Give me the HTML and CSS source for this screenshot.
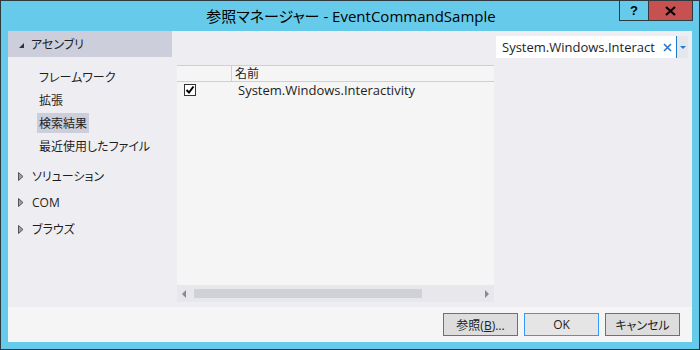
FILE: index.html
```html
<!DOCTYPE html>
<html lang="ja">
<head>
    <meta charset="UTF-8">
    <title>参照マネージャー - EventCommandSample</title>
    <link rel="stylesheet" href="styles.css">
</head>
<body>
    <div class="window">
        <div class="titlebar">
            <div class="title">参照マネージャー - EventCommandSample</div>
            <div class="caption-buttons">
                <div class="cap-btn help">?</div>
                <div class="cap-btn close">
                    <svg width="11" height="10" viewBox="0 0 11 10"><path d="M1 1 L10 9 M10 1 L1 9" stroke="#000" stroke-width="2.2"/></svg>
                </div>
            </div>
        </div>

        <div class="client">
            <div class="main">
                <div class="sidebar">
                    <div class="group-header">
                        <span class="tri-open"></span>
                        <span>アセンブリ</span>
                    </div>
                    <div class="sub-items">
                        <div class="sub-item">フレームワーク</div>
                        <div class="sub-item">拡張</div>
                        <div class="sub-item"><span class="selected">検索結果</span></div>
                        <div class="sub-item">最近使用したファイル</div>
                    </div>
                    <div class="group">
                        <svg class="tri-closed" width="6" height="9" viewBox="0 0 6 9"><path d="M0.5 0.5 L5 4.5 L0.5 8.5 Z" fill="#a0a0a0" stroke="#555" stroke-width="1"/></svg>
                        <span>ソリューション</span>
                    </div>
                    <div class="group">
                        <svg class="tri-closed" width="6" height="9" viewBox="0 0 6 9"><path d="M0.5 0.5 L5 4.5 L0.5 8.5 Z" fill="#a0a0a0" stroke="#555" stroke-width="1"/></svg>
                        <span>COM</span>
                    </div>
                    <div class="group">
                        <svg class="tri-closed" width="6" height="9" viewBox="0 0 6 9"><path d="M0.5 0.5 L5 4.5 L0.5 8.5 Z" fill="#a0a0a0" stroke="#555" stroke-width="1"/></svg>
                        <span>ブラウズ</span>
                    </div>
                </div>

                <div class="center">
                    <div class="list">
                        <div class="list-header">
                            <div class="col-check"></div>
                            <div class="col-name">名前</div>
                        </div>
                        <div class="list-row">
                            <div class="col-check">
                                <span class="checkbox">
                                    <svg width="10" height="10" viewBox="0 0 10 10"><path d="M1.5 5 L4 7.5 L8.5 1.5" fill="none" stroke="#000" stroke-width="2"/></svg>
                                </span>
                            </div>
                            <div class="row-name">System.Windows.Interactivity</div>
                        </div>
                    </div>
                    <div class="hscroll">
                        <span class="arrow-left"></span>
                        <div class="track"><div class="thumb"></div></div>
                        <span class="arrow-right"></span>
                    </div>
                </div>

                <div class="right">
                    <div class="search">
                        <span class="search-text">System.Windows.Interact</span>
                        <span class="search-clear">
                            <svg width="9" height="9" viewBox="0 0 9 9"><path d="M1 1 L8 8 M8 1 L1 8" stroke="#1e7bd0" stroke-width="1.6"/></svg>
                        </span>
                        <span class="search-drop"><span class="drop-arrow"></span></span>
                    </div>
                </div>
            </div>

            <div class="footer">
                <button class="btn">参照(<u>B</u>)...</button>
                <button class="btn default">OK</button>
                <button class="btn">キャンセル</button>
            </div>
        </div>
    </div>
</body>
</html>
```

FILE: styles.css
```css
body {
    margin: 0;
    font-family: "Open Sans", "Noto Sans CJK JP", sans-serif;
    font-size: 12px;
    font-feature-settings: "palt";
    color: #1e1e1e;
}
.window {
    width: 700px;
    height: 350px;
    box-sizing: border-box;
    border: 1px solid #2f3a40;
    background: #66cbea;
    display: flex;
    flex-direction: column;
}
.titlebar {
    height: 30px;
    position: relative;
    display: flex;
    align-items: center;
    justify-content: center;
}
.title {
    font-size: 15px;
    color: #000;
    margin-left: 2px;
    margin-top: -2px;
}
.caption-buttons {
    position: absolute;
    top: -1px;
    right: 6px;
    display: flex;
}
.cap-btn {
    height: 21px;
    display: flex;
    align-items: center;
    justify-content: center;
    border: 1px solid #2f3a40;
    box-sizing: border-box;
}
.help {
    width: 29px;
    font-weight: bold;
    font-size: 13px;
    font-family: "Liberation Sans", sans-serif;
    color: #000;
    border-right: none;
}
.close {
    width: 45px;
    background: #c75050;
}
.client {
    flex: 1;
    margin: 0 7px 7px 7px;
    background: #eeeef2;
    display: flex;
    flex-direction: column;
}
.main {
    flex: 1;
    display: flex;
}
.sidebar {
    width: 169px;
}
.group-header {
    width: 164px;
    height: 26px;
    background: #cccedb;
    display: flex;
    align-items: center;
}
.tri-open {
    width: 0;
    height: 0;
    border-left: 5px solid transparent;
    border-bottom: 5px solid #333;
    margin: 2px 7px 0 11px;
}
.tri-closed {
    margin: 0 8px 0 10px;
}
.sub-items {
    padding: 8px 0 6px 31px;
}
.sub-item {
    height: 23px;
    display: flex;
    align-items: center;
}
.selected {
    background: #cccedb;
    padding: 1px 2px;
    margin-left: -2px;
}
.group {
    height: 26.5px;
    display: flex;
    align-items: center;
}
.center {
    width: 317px;
    display: flex;
    flex-direction: column;
    padding-top: 34px;
}
.list {
    flex: 1;
    background: #f5f5f5;
}
.list-header {
    height: 15px;
    border-top: 1px solid #cccedb;
    border-bottom: 1px solid #cccedb;
    display: flex;
    align-items: center;
}
.col-check {
    width: 54px;
    height: 100%;
    display: flex;
    align-items: center;
}
.list-header .col-check {
    border-right: 1px solid #cccedb;
}
.col-name {
    padding-left: 3px;
    line-height: 14px;
}
.list-row {
    height: 16px;
    display: flex;
    align-items: center;
}
.checkbox {
    width: 12px;
    height: 12px;
    box-sizing: border-box;
    border: 1px solid #333;
    background: #fff;
    margin-left: 7px;
    display: flex;
    align-items: center;
    justify-content: center;
}
.row-name {
    padding-left: 7px;
    font-size: 13px;
    line-height: 15px;
}
.hscroll {
    height: 17px;
    background: #e8e8ec;
    margin-bottom: 5px;
    display: flex;
    align-items: center;
}
.arrow-left {
    width: 0;
    height: 0;
    border-top: 4px solid transparent;
    border-bottom: 4px solid transparent;
    border-right: 4px solid #868999;
    margin: 0 5px 0 5px;
}
.arrow-right {
    width: 0;
    height: 0;
    border-top: 4px solid transparent;
    border-bottom: 4px solid transparent;
    border-left: 4px solid #868999;
    margin: 0 5px 0 5px;
}
.track {
    flex: 1;
    height: 9px;
    margin-left: 3px;
}
.thumb {
    width: 228px;
    height: 9px;
    background: #d0d0d7;
}
.right {
    flex: 1;
}
.search {
    margin: 5px 4px 0 2px;
    height: 22px;
    background: #fff;
    display: flex;
    align-items: center;
}
.search-text {
    padding-left: 6px;
    flex: 1;
    white-space: nowrap;
    overflow: hidden;
    font-size: 13px;
}
.search-clear {
    width: 14px;
    display: flex;
    justify-content: center;
}
.search-drop {
    width: 11px;
    height: 22px;
    margin-left: 2px;
    border-left: 1px solid #1e7bd0;
    background: #e6e7ed;
    display: flex;
    align-items: center;
    justify-content: center;
}
.drop-arrow {
    width: 0;
    height: 0;
    border-left: 3px solid transparent;
    border-right: 3px solid transparent;
    border-top: 3px solid #1e7bd0;
}
.footer {
    height: 35px;
    background: #f5f5f5;
    display: flex;
    align-items: center;
    justify-content: flex-end;
    gap: 6px;
    padding-right: 12px;
}
.btn {
    width: 75px;
    height: 23px;
    border: 1px solid #707070;
    background: #dddddd;
    font-family: "Open Sans", "Noto Sans CJK JP", sans-serif;
    font-size: 12px;
    font-feature-settings: "palt";
    color: #1e1e1e;
    padding: 0;
}
.btn.default {
    border-color: #3399ff;
    background: #e5e5e5;
}
```
